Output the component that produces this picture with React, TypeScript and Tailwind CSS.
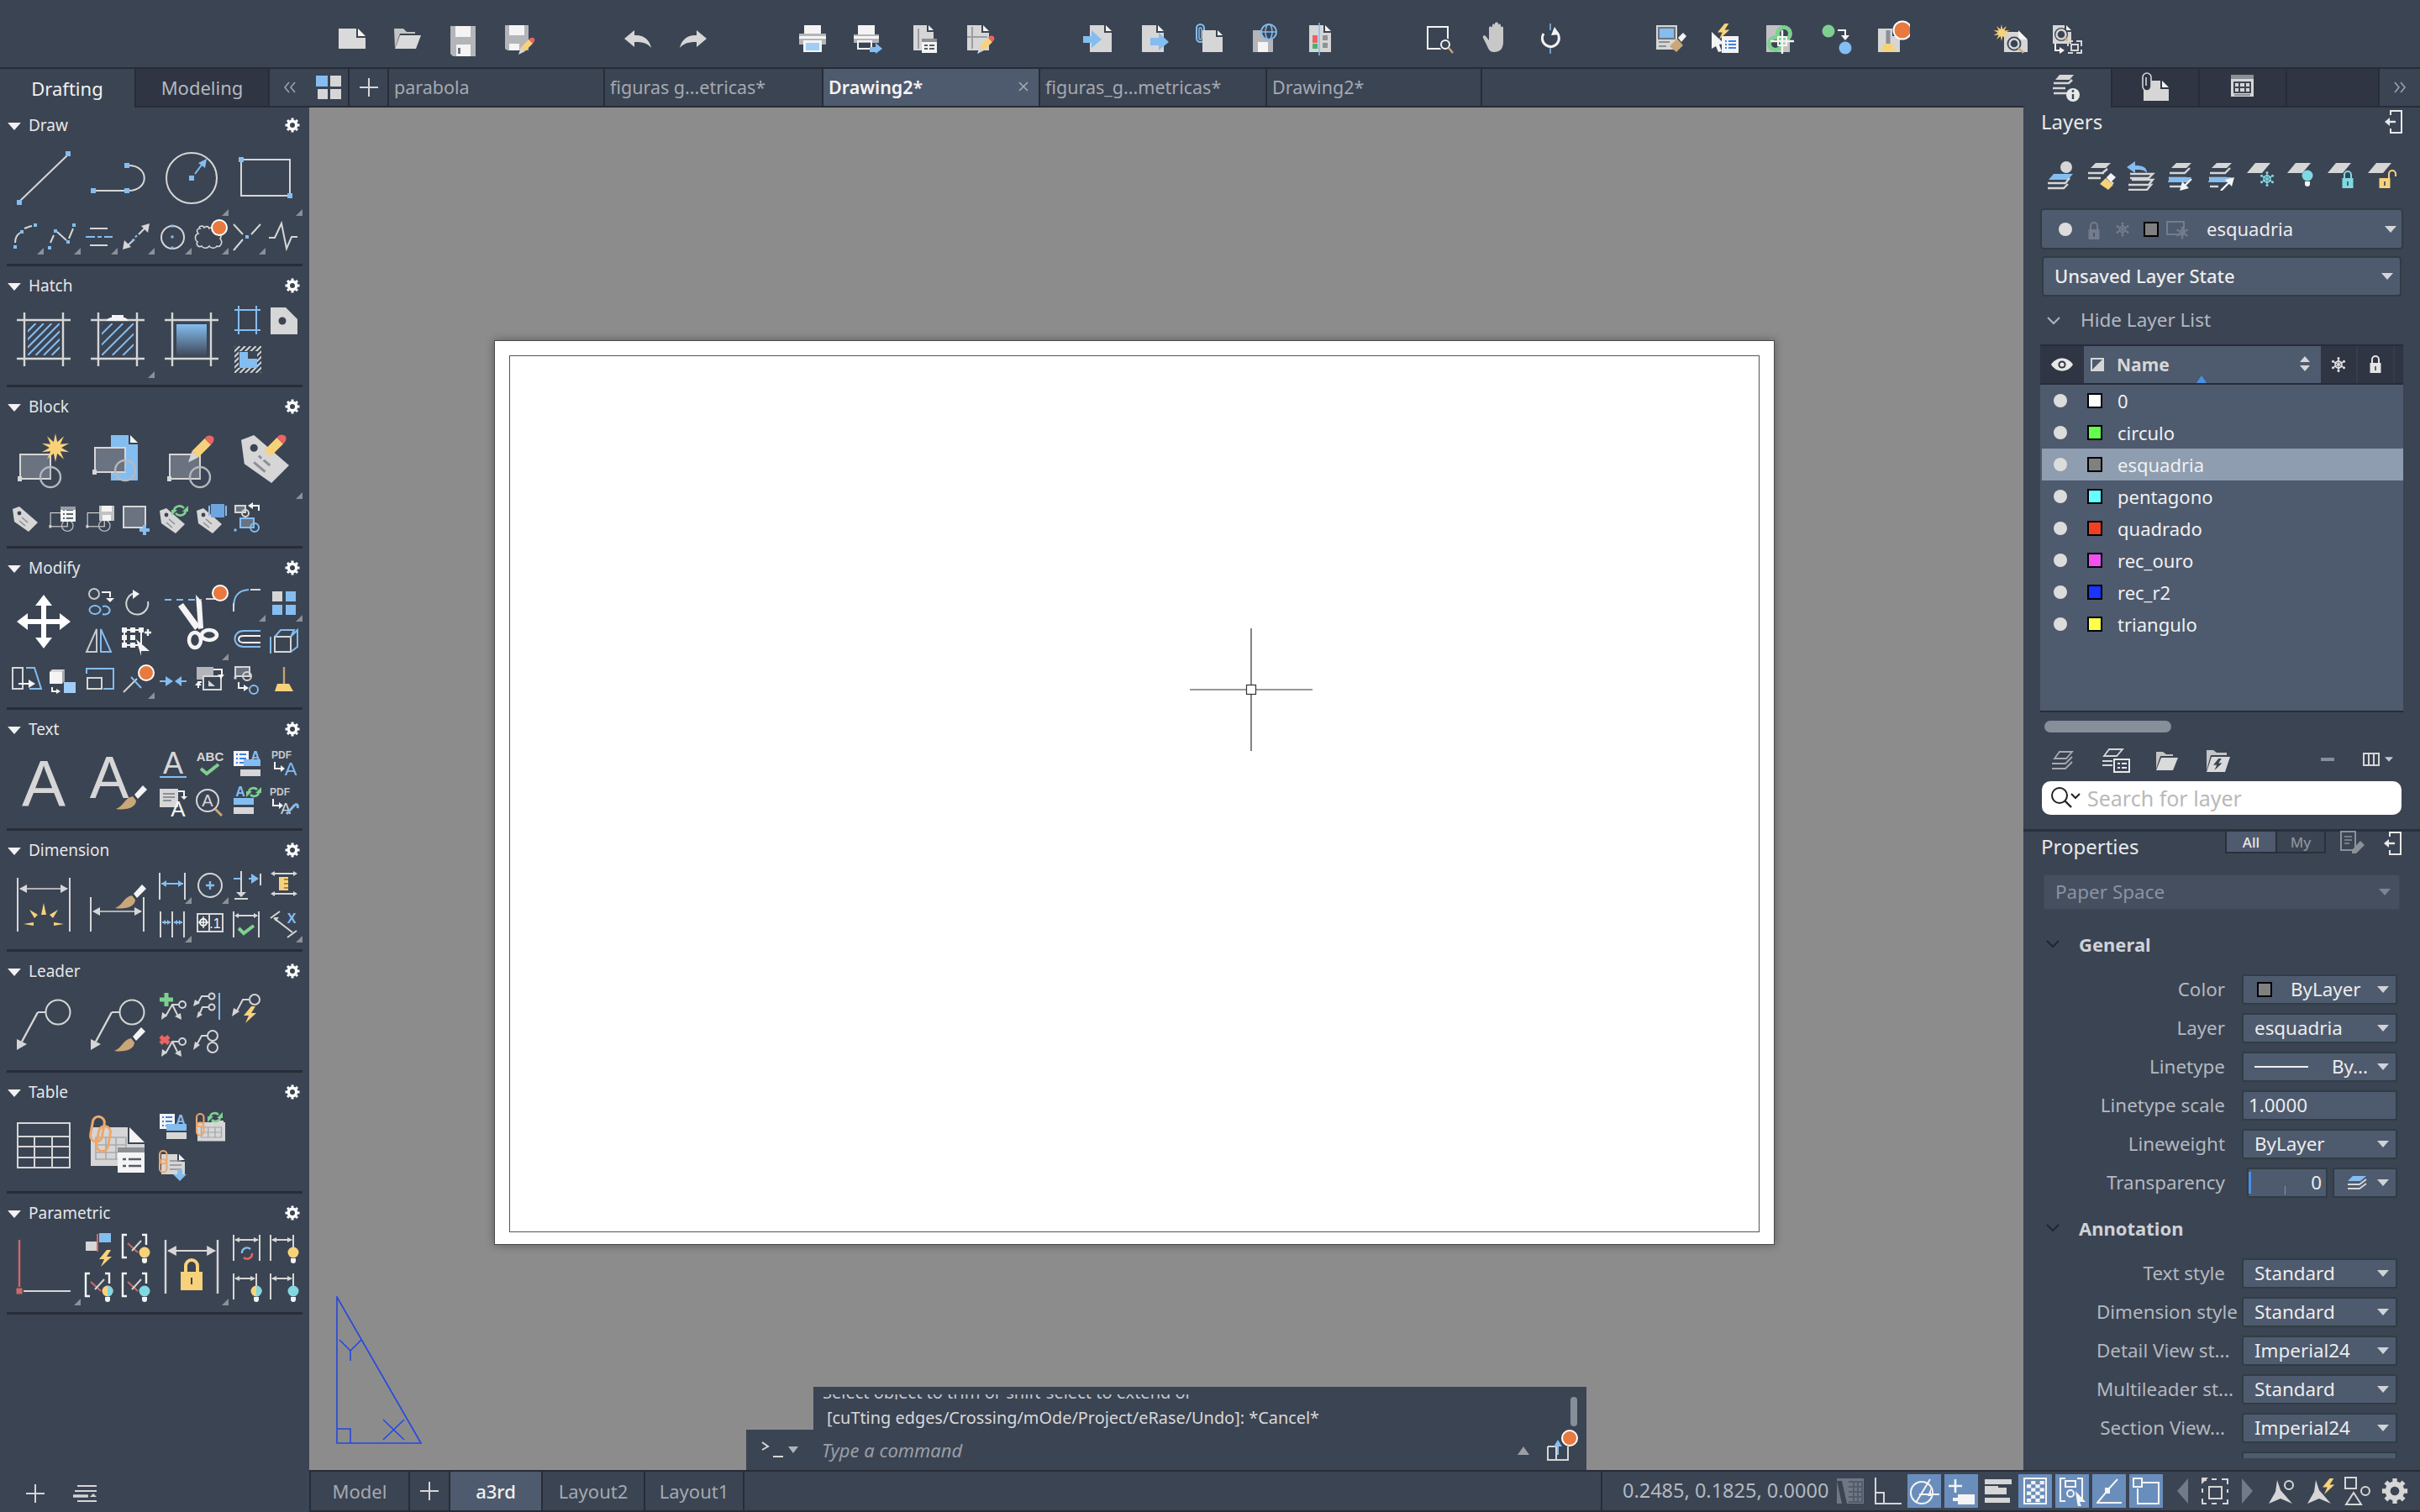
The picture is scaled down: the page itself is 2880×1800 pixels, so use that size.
import React from 'react';

const G = '#d6d6d6';
const B = '#84bdf0';
const W = '#f4f4f4';
const O = '#e8793f';
const Y = '#f8d27b';
const T = '#c9a778';
const GR = '#7ed091';
const RD = '#ec6363';
const CY = '#80d8e2';
const DK = '#6b7280';
const BG = '#3b4453';
const FA = 'Liberation Sans, sans-serif';

type P = { children?: React.ReactNode };

const Sv: React.FC<P & { w?: number; h?: number }> = ({ w = 44, h = 44, children }) => (
  <svg width={w} height={h} viewBox={`0 0 ${w} ${h}`} fill="none" className="block">
    {children}
  </svg>
);
const L = ({ d, c = G, w = 2, dash }: { d: string; c?: string; w?: number; dash?: string }) => (
  <path d={d} stroke={c} strokeWidth={w} strokeDasharray={dash} fill="none" />
);
const F = ({ d, c = G }: { d: string; c?: string }) => <path d={d} fill={c} />;
const R = ({ x, y, w, h, c = G }: { x: number; y: number; w: number; h: number; c?: string }) => (
  <rect x={x} y={y} width={w} height={h} fill={c} />
);
const RO = ({ x, y, w, h, c = G, f = 'none', sw = 2 }: { x: number; y: number; w: number; h: number; c?: string; f?: string; sw?: number }) => (
  <rect x={x} y={y} width={w} height={h} stroke={c} strokeWidth={sw} fill={f} />
);
const C = ({ x, y, r, c = G, w = 2, f = 'none' }: { x: number; y: number; r: number; c?: string; w?: number; f?: string }) => (
  <circle cx={x} cy={y} r={r} stroke={c} strokeWidth={w} fill={f} />
);
const Q = ({ x, y, s = 6, c = B }: { x: number; y: number; s?: number; c?: string }) => (
  <rect x={x - s / 2} y={y - s / 2} width={s} height={s} fill={c} />
);
const Dot = ({ x, y, r = 9 }: { x: number; y: number; r?: number }) => (
  <circle cx={x} cy={y} r={r} fill={O} stroke="#ffffff" strokeWidth={2} />
);
const Tx = ({ x, y, s, t, c = G, b = false, a = 'middle' }: { x: number; y: number; s: number; t: string; c?: string; b?: boolean; a?: 'middle' | 'start' }) => (
  <text x={x} y={y} fontSize={s} fontFamily={FA} fontWeight={b ? 700 : 400} fill={c} textAnchor={a}>
    {t}
  </text>
);
const At = ({ x, y, s = 1, children }: P & { x: number; y: number; s?: number }) => (
  <g transform={`translate(${x} ${y}) scale(${s})`}>{children}</g>
);
const Brush = ({ x, y, s = 1 }: { x: number; y: number; s?: number }) => (
  <At x={x} y={y} s={s}>
    <F c={T} d="M0 28C9 25 10 15 20 13L24 18C24 26 13 30 0 28Z" />
    <F c={W} d="M22 11L32 0L37 5L26 16Z" />
  </At>
);
const Pencil = ({ x, y, s = 1 }: { x: number; y: number; s?: number }) => (
  <At x={x} y={y} s={s}>
    <F c={G} d="M3 12L8 17L0 21Z" />
    <F c={Y} d="M3 12L13 2L18 7L8 17Z" />
    <F c={RD} d="M13 2C15 -1 18 -1 20 1C21 3 20 5 18 7Z" />
  </At>
);
const Bolt = ({ x, y, s = 1 }: { x: number; y: number; s?: number }) => (
  <At x={x} y={y} s={s}>
    <F c={Y} d="M9 0L0 11H6L2 20L15 8H9L14 0Z" />
  </At>
);
const Bulb = ({ x, y, c = Y, c2 }: { x: number; y: number; c?: string; c2?: string }) => (
  <At x={x} y={y}>
    <circle cx={0} cy={0} r={6.5} fill={c} />
    {c2 && <path d="M0 -6.5A6.5 6.5 0 0 1 0 6.5Z" fill={c2} />}
    <F c={W} d="M-3 7H3V10A3 3 0 0 1 -3 10Z" />
  </At>
);
const Snow = ({ x, y, c = G, r = 8 }: { x: number; y: number; c?: string; r?: number }) => (
  <At x={x} y={y}>
    <path d={`M0 ${-r}V${r}M${-r * 0.87} ${-r / 2}L${r * 0.87} ${r / 2}M${-r * 0.87} ${r / 2}L${r * 0.87} ${-r / 2}`} stroke={c} strokeWidth={1.4} />
    <path d={`M0 ${-r * 0.6}L${r * 0.52} ${-r * 0.3}V${r * 0.3}L0 ${r * 0.6}L${-r * 0.52} ${r * 0.3}V${-r * 0.3}Z`} stroke={c} strokeWidth={1.6} fill="none" />
    <circle cx={0} cy={-r} r={1.5} fill={c} />
    <circle cx={0} cy={r} r={1.5} fill={c} />
    <circle cx={r * 0.87} cy={r / 2} r={1.5} fill={c} />
    <circle cx={-r * 0.87} cy={r / 2} r={1.5} fill={c} />
    <circle cx={r * 0.87} cy={-r / 2} r={1.5} fill={c} />
    <circle cx={-r * 0.87} cy={-r / 2} r={1.5} fill={c} />
  </At>
);
const Lock = ({ x, y, c = G, open = false }: { x: number; y: number; c?: string; open?: boolean }) => (
  <At x={x} y={y}>
    <path d={open ? 'M5 -1V-6A4 4 0 0 1 13 -6V-3' : 'M-4 0V-5A4 4 0 0 1 4 -5V0'} stroke={c} strokeWidth={2} fill="none" />
    <rect x={-6.5} y={-1} width={13} height={12} fill={c} />
    <rect x={-0.8} y={3} width={1.6} height={5} fill={BG} />
  </At>
);
const Doc = ({ x, y, w, h, c = G, fold = W }: { x: number; y: number; w: number; h: number; c?: string; fold?: string }) => {
  const f = Math.round(w * 0.3);
  return (
    <>
      <path d={`M${x} ${y}H${x + w - f - 1}V${y + f + 1}H${x + w}V${y + h}H${x}Z`} fill={c} />
      <path d={`M${x + w - f + 1} ${y}L${x + w} ${y + f - 1}H${x + w - f + 1}Z`} fill={fold} />
    </>
  );
};
const Tag = ({ x, y, s = 1 }: { x: number; y: number; s?: number }) => (
  <At x={x} y={y} s={s}>
    <F d="M0 3L8 0L30 19L19 30L2 18Z" />
    <circle cx={8} cy={8} r={2.4} fill={BG} />
    <path d="M11 13L18 19M8 17L15 23" stroke="#8b8f96" strokeWidth={1.6} />
  </At>
);
const Blk = ({ x, y, s = 1, fill = DK }: { x: number; y: number; s?: number; fill?: string }) => (
  <At x={x} y={y} s={s}>
    <rect x={2} y={1} width={36} height={29} fill={fill} stroke={G} strokeWidth={2} />
    <rect x={-1} y={27} width={5} height={6} fill={G} />
    <circle cx={38} cy={28} r={12} stroke="#b6b9be" strokeWidth={2.4} fill="none" />
    <path d="M38 16V30" stroke="#b6b9be" strokeWidth={1.5} />
  </At>
);
const Star = ({ x, y, r = 17 }: { x: number; y: number; r?: number }) => {
  let d = '';
  for (let i = 0; i < 20; i++) {
    const a = (i * Math.PI) / 10;
    const q = i % 2 ? r * 0.42 : r;
    d += `${i ? 'L' : 'M'}${(x + Math.sin(a) * q).toFixed(1)} ${(y - Math.cos(a) * q).toFixed(1)}`;
  }
  return <path d={d + 'Z'} fill={Y} />;
};
const Frame = ({ cap = false }: { cap?: boolean }) => (
  <>
    <L d="M12 21H76M12 67H76M21 12V76M67 12V76" w={2.4} />
    {cap && <F c={W} d="M31 22C31 19 35 18 37 18V15H51V18C53 18 56 19 56 22Z" />}
  </>
);
const HatchIn = ({ x, y, w, h, n = 9, c = B }: { x: number; y: number; w: number; h: number; n?: number; c?: string }) => (
  <svg x={x} y={y} width={w} height={h}>
    {Array.from({ length: n }).map((_, i) => (
      <line key={i} x1={(i * (w + h)) / (n - 1) - h} y1={h} x2={(i * (w + h)) / (n - 1)} y2={0} stroke={c} strokeWidth={2} />
    ))}
  </svg>
);
const Dim = ({ x1, x2, y, top, bot, w = 2, c = G, head = 5 }: { x1: number; x2: number; y: number; top: number; bot: number; w?: number; c?: string; head?: number }) => (
  <>
    <L d={`M${x1} ${top}V${bot}M${x2} ${top}V${bot}`} w={w} />
    <L c={c} d={`M${x1 + 3} ${y}H${x2 - 3}`} w={w - 0.4} />
    <F c={c} d={`M${x1 + 2} ${y}L${x1 + 2 + head * 1.8} ${y - head}V${y + head}Z`} />
    <F c={c} d={`M${x2 - 2} ${y}L${x2 - 2 - head * 1.8} ${y - head}V${y + head}Z`} />
  </>
);
const Tbl = ({ x, y, s = 1 }: { x: number; y: number; s?: number }) => (
  <At x={x} y={y} s={s}>
    <R x={0} y={0} w={44} h={30} c={G} />
    <path d="M6 8H38V24H6ZM6 16H38M17 8V24M28 8V24" stroke="#a2a4a8" strokeWidth={1.6} fill="none" />
  </At>
);
const Link = ({ x, y, s = 1 }: { x: number; y: number; s?: number }) => (
  <At x={x} y={y} s={s}>
    <rect x={0} y={0} width={10} height={18} rx={5} stroke="#eca86c" strokeWidth={2.4} fill="none" />
    <rect x={0} y={12} width={10} height={18} rx={5} stroke="#eca86c" strokeWidth={2.4} fill="none" />
  </At>
);
const Lst = ({ x, y, w = 18, c = '#3b82e8' }: { x: number; y: number; w?: number; c?: string }) => (
  <>
    <R x={x} y={y} w={w} h={w} c={W} />
    <path d={`M${x + 3} ${y + 4}h2M${x + 7} ${y + 4}h${w - 10}M${x + 3} ${y + w / 2}h2M${x + 7} ${y + w / 2}h${w - 10}M${x + 3} ${y + w - 4}h2M${x + 7} ${y + w - 4}h${w - 10}`} stroke={c} strokeWidth={2} />
  </>
);
const Sync = ({ x, y, r = 7, c = GR }: { x: number; y: number; r?: number; c?: string }) => (
  <At x={x} y={y}>
    <path d={`M${-r} -1A${r} ${r} 0 0 1 ${r - 2} -3`} stroke={c} strokeWidth={2.6} fill="none" />
    <path d={`M${r} 1A${r} ${r} 0 0 1 ${-r + 2} 3`} stroke={c} strokeWidth={2.6} fill="none" />
    <path d={`M${r + 3} -6V1H${r - 4}Z`} fill={c} />
    <path d={`M${-r - 3} 6V-1H${-r + 4}Z`} fill={c} />
  </At>
);
const Bracket = () => (
  <>
    <L w={2.4} c={W} d="M11 33H6V6H11M29 6H34V18" />
    <L c="#cc6a6a" d="M12 16L24 27" w={2} />
    <L d="M17 25L28 13" w={2} />
  </>
);
const DimTop = () => (
  <>
    <L d="M6 6V37M33 6V22" />
    <L d="M8 12H31" />
    <F d="M7 12L13 9V15Z" />
    <F d="M32 12L26 9V15Z" />
  </>
);

// ---- top toolbar icons ----
const Disk = ({ x = 6, y = 6 }: { x?: number; y?: number }) => (
  <At x={x} y={y}>
    <F c="#b3b5b8" d="M0 0H30V36H3L0 33Z" />
    <R x={6} y={0} w={18} h={13} c={W} />
    <R x={7} y={22} w={17} h={14} c={W} />
    <R x={9} y={26} w={3} h={7} c="#6b7280" />
  </At>
);
const top: React.ReactNode[][] = [
  [
    <Doc key="a" x={6} y={10} w={32} h={24} c="#dadada" />,
    <g key="b">
      <F c="#c4c4c4" d="M6 10H17L21 14H31V16H13L7 33Z" />
      <F c="#dadada" d="M13 18H38L32 34H7Z" />
    </g>,
    <Disk key="c" x={7} y={7} />,
    <g key="d">
      <At x={6} y={6}>
        <F c="#b3b5b8" d="M0 0H28V30H3L0 28Z" />
        <R x={5} y={0} w={18} h={12} c={W} />
        <R x={5} y={22} w={12} h={8} c={W} />
      </At>
      <Pencil x={22} y={21} s={0.95} />
    </g>,
  ],
  [
    <F key="e" c="#d6d6d6" d="M6 22L18 12V18C28 17 36 23 38 33C33 27 27 26 18 26V32Z" />,
    <F key="f" c="#d6d6d6" d="M38 22L26 12V18C16 17 8 23 6 33C11 27 17 26 26 26V32Z" />,
  ],
  [
    <g key="g">
      <R x={12} y={6} w={20} h={10} c={W} />
      <R x={6} y={16} w={32} h={13} c="#b3b5b8" />
      <R x={6} y={19} w={32} h={3} c={W} />
      <R x={11} y={24} w={22} h={14} c={W} />
      <R x={14} y={27} w={16} h={9} c="#9fcdf7" />
    </g>,
    <g key="h">
      <R x={10} y={6} w={20} h={11} c={W} />
      <R x={5} y={17} w={30} h={10} c="#b3b5b8" />
      <R x={5} y={19} w={30} h={3} c={W} />
      <RO x={10} y={25} w={16} h={9} c={W} />
      <F c={B} d="M24 38V32H31V27L39 34L31 40V38Z" transform="translate(-2 -1)" />
    </g>,
    <g key="i">
      <Doc x={10} y={6} w={24} h={30} c="#d6d6d6" />
      <path d="M16 10V34" stroke="#9c9ea2" strokeWidth={2} />
      <R x={20} y={22} w={18} h={17} c={W} />
      <R x={20} y={22} w={18} h={4} c="#8c8f94" />
      <R x={23} y={29} w={4} h={2} c="#555c68" />
      <R x={29} y={29} w={6} h={2} c="#555c68" />
      <R x={23} y={33} w={4} h={2} c="#555c68" />
      <R x={29} y={33} w={6} h={2} c="#555c68" />
    </g>,
    <g key="j">
      <Doc x={8} y={6} w={26} h={30} c="#d6d6d6" />
      <path d="M14 8V34" stroke="#9c9ea2" strokeWidth={2} />
      <path d="M8 20H32" stroke="#9c9ea2" strokeWidth={2} />
      <Pencil x={20} y={19} s={1} />
    </g>,
  ],
  [
    <g key="k">
      <Doc x={12} y={6} w={26} h={32} />
      <F c={B} d="M4 19H14V12L26 23L14 33V27H4Z" />
    </g>,
    <g key="l">
      <Doc x={8} y={6} w={26} h={32} />
      <F c={B} d="M18 21H28V15L40 26L28 36V30H18Z" />
    </g>,
    <g key="m">
      <rect x={7} y={5} width={9} height={21} rx={4.5} stroke={B} strokeWidth={2} fill="none" />
      <rect x={10} y={9} width={3} height={14} rx={1.5} stroke={B} strokeWidth={1.5} fill="none" />
      <Doc x={14} y={12} w={24} h={26} />
    </g>,
    <g key="n">
      <At x={8} y={12}>
        <F c="#b3b5b8" d="M0 0H24V26H0Z" />
        <R x={6} y={14} w={12} h={12} c={W} />
      </At>
      <circle cx={27} cy={14} r={9.5} fill={BG} />
      <circle cx={27} cy={14} r={9} stroke={B} strokeWidth={2} fill="none" />
      <ellipse cx={27} cy={14} rx={4} ry={9} stroke={B} strokeWidth={1.5} fill="none" />
      <path d="M18 14H36" stroke={B} strokeWidth={1.5} />
    </g>,
    <g key="o">
      <Doc x={9} y={6} w={26} h={32} />
      <path d="M21 3V42" stroke={B} strokeWidth={1.5} />
      <R x={13} y={18} w={6} h={9} c={RD} />
      <R x={13} y={28} w={6} h={6} c="#49b36b" />
      <R x={25} y={18} w={6} h={6} c="#909296" />
      <R x={25} y={27} w={6} h={6} c="#909296" />
    </g>,
  ],
  [
    <g key="p">
      <RO x={8} y={8} w={24} h={26} c={W} />
      <circle cx={29} cy={29} r={7.5} fill={BG} />
      <C x={29} y={29} r={5} w={2} c={W} />
      <L c={T} d="M33 33L38 39" w={2.4} />
    </g>,
    <F key="q" c="#c8c8c8" d="M19 12V6C19 4 22 4 22 6V4C22 2 26 2 26 4V6C26 4 29 4 29 6V9C29 7 32 7 32 9V26C32 33 29 38 21 38C15 38 14 33 12 29L8 21C7 18 10 17 12 20L15 24V9C15 7 19 7 19 9Z" />,
    <g key="r">
      <path d="M22 4V12M22 30V40" stroke={B} strokeWidth={1.5} />
      <path d="M14 16A10 10 0 1 0 29 14" stroke={W} strokeWidth={3} fill="none" />
      <F c={W} d="M27 8L33 17L23 18Z" />
    </g>,
  ],
  [
    <g key="s">
      <R x={6} y={6} w={25} h={29} c={G} />
      <RO x={9} y={9} w={19} h={13} c="#70747a" f={B} />
      <path d="M9 26H22M9 31H18" stroke="#8b8f96" strokeWidth={2} />
      <F c={T} d="M22 31L31 22L38 30L30 38Z" />
      <F c={W} d="M32 21L38 15L42 19L36 26Z" transform="translate(0 1)" />
    </g>,
    <g key="t">
      <F c={W} d="M6 14L21 28L15 29L18 37L14 38L11 31L6 34Z" />
      <R x={18} y={19} w={20} h={20} c={W} />
      <path d="M22 25h2M26 25h9M22 29h2M26 29h9M22 33h2M26 33h9" stroke="#3b82e8" strokeWidth={2} />
      <Bolt x={13} y={4} s={0.95} />
    </g>,
    <g key="u">
      <Doc x={5} y={6} w={28} h={32} c="#c2c2c2" />
      <circle cx={26} cy={16} r={10} fill={GR} />
      <circle cx={16} cy={28} r={10} fill={GR} />
      <circle cx={26} cy={16} r={5} fill={BG} />
      <circle cx={16} cy={28} r={5} fill={BG} />
      <path d="M10 25H38M24 12V40" stroke={W} strokeWidth={2.4} />
      <RO x={19} y={20} w={10} h={10} c={W} />
    </g>,
    <g key="v">
      <circle cx={13} cy={13} r={7.5} fill={GR} />
      <circle cx={33} cy={33} r={7.5} fill={B} />
      <path d="M24 12H33V19" stroke={W} strokeWidth={2} />
      <F c={W} d="M28 18H38L33 24Z" />
    </g>,
    <g key="w">
      <Doc x={6} y={10} w={26} h={28} c={G} />
      <path d="M18 12V28" stroke="#8b8f96" strokeWidth={5} />
      <F c={Y} d="M9 38L13 28H23L27 38Z" />
      <circle cx={35} cy={12} r={10.5} fill={O} stroke="#ffffff" strokeWidth={2} />
    </g>,
  ],
  [
    <g key="x">
      <path d="M14 14H32L42 24V38H14Z" fill={G} />
      <path d="M31 12L42 23H31Z" fill={W} />
      <circle cx={26} cy={28} r={8.5} fill={BG} />
      <C x={26} y={28} r={5.5} w={2.4} c={G} />
      <L c={T} d="M31 33L37 39" w={2.4} />
      <Star x={11} y={15} r={10} />
    </g>,
    <g key="y">
      <Doc x={6} y={6} w={22} h={22} />
      <circle cx={16} cy={17} r={8} fill={BG} />
      <C x={16} y={17} r={5.5} w={2.4} c={G} />
      <L c={T} d="M20 21L26 27" w={2.4} />
      <L c={W} d="M9 28V36H15" w={2} />
      <F c={W} d="M14 32L20 36L14 40Z" />
      <path d="M24 31V25H30M34 25H40V31M40 35V39H34M30 39H24" stroke={G} strokeWidth={2} fill="none" />
      <RO x={28} y={29} w={8} h={7} c={G} />
    </g>,
  ],
];

// ---- palette ----
type It = { n: React.ReactNode; big?: boolean; fly?: boolean };
const big = (n: React.ReactNode, fly = false): It => ({ n: <Sv w={88} h={90}>{n}</Sv>, big: true, fly });
const sm = (n: React.ReactNode, fly = false): It => ({ n: <Sv>{n}</Sv>, fly });
const gap: It = { n: null };

const draw: It[] = [
  big(<><L d="M16 72L72 18" /><Q x={15} y={74} /><Q x={73} y={16} /></>),
  big(<><L d="M18 60H52" /><L d="M57 30C82 30 82 60 57 60" /><Q x={15} y={60} /><Q x={55} y={60} /><Q x={55} y={30} /></>),
  big(<><C x={44} y={45} r={30} /><Q x={44} y={45} /><L c={B} d="M48 40L57 28" /><F c={B} d="M62 22L52 27L60 33Z" /></>, true),
  big(<><path d="M15 23H73V66" stroke={G} strokeWidth={2} /><path d="M15 23V66H73" stroke={G} strokeWidth={2} /><Q x={15} y={23} /><Q x={73} y={66} /></>, true),
  sm(<><L d="M10 30C10 24 13 20 16 18M21 13C24 12 26 11 30 10" /><Q x={10} y={35} s={4} /><Q x={18} y={17} s={4} /><Q x={34} y={9} s={4} /></>, true),
  sm(<><L d="M8 30L12 21M16 17L27 27M30 25L35 13" /><Q x={7} y={36} s={4} /><Q x={14} y={16} s={4} /><Q x={29} y={29} s={4} /><Q x={36} y={9} s={4} /></>, true),
  sm(<><L d="M11 13H32M11 33H32" /><L c={B} d="M6 23H17M20 23H25M28 23H38" /></>, true),
  sm(<><L d="M20 26L12 33M25 20L33 12" /><L c={B} d="M17 28L24 20" dash="3 3" /><F d="M6 38L8 27L16 35Z" /><F d="M38 7L36 18L28 10Z" /></>, true),
  sm(<><path d="M21 10A13.5 13.5 0 0 0 8 23A13.5 13.5 0 0 0 21 37A13.5 13.5 0 0 0 35 23A13.5 13.5 0 0 0 21 10" stroke={G} strokeWidth={2} fill="none" /><Q x={21} y={10} s={3} /><Q x={21} y={23} s={3} /><Q x={21} y={36} s={3} /></>, true),
  sm(<><path d="M10 13C7 10 14 9 15 12C17 10 20 10 21 13C24 10 30 11 28 15C36 17 36 22 34 25C38 30 34 36 30 34C28 38 22 36 21 34C18 38 13 36 12 34C8 36 5 32 7 29C3 26 4 20 8 19C5 16 7 13 10 13Z" stroke={G} strokeWidth={1.6} fill="none" /><Dot x={33} y={12} r={9} /></>, true),
  sm(<><L d="M6 8L17 20M38 8L27 20M6 39L17 26" /><Q x={22} y={23} s={4} /></>, true),
  sm(<L d="M4 24H11L19 7L25 37L31 23H38" />),
];

const hatch: It[] = [
  big(<><Frame /><HatchIn x={25} y={25} w={38} h={38} /></>),
  big(<><Frame cap /><HatchIn x={25} y={25} w={38} h={38} n={7} /></>, true),
  big(<><defs><linearGradient id="hgrad" x1="0" y1="0" x2="0" y2="1"><stop offset="0" stopColor="#84bdf0" /><stop offset="1" stopColor="#3f4858" /></linearGradient></defs><Frame /><rect x={26} y={26} width={36} height={38} fill="url(#hgrad)" /></>),
  sm(<><L c={B} d="M7 9H38M7 33H38M12 4V38M33 4V38" /></>),
  sm(<><F d="M6 6H24L38 20V38H6Z" /><circle cx={20} cy={22} r={4.5} fill={BG} /></>),
  sm(<><HatchIn x={7} y={6} w={32} h={32} n={11} c={G} /><F c={BG} d="M12 12H34V32H12Z" /><F c={B} d="M13 13H23V21H34V32H13Z" /></>),
];

const block: It[] = [
  big(<><Blk x={14} y={36} /><Star x={58} y={29} /></>),
  big(<><Doc x={36} y={14} w={32} h={54} c={B} /><Blk x={15} y={28} s={1} /></>),
  big(<><Blk x={16} y={36} /><Pencil x={40} y={15} s={1.5} /></>),
  big(<><Tag x={15} y={14} s={1.9} /><Pencil x={38} y={14} s={1.5} /></>, true),
  sm(<Tag x={7} y={7} />),
  sm(<><Blk x={7} y={14} s={0.56} fill="none" /><Lst x={20} y={7} w={18} c="#5c6472" /><R x={20} y={7} w={18} h={4} c="#9a9da2" /></>),
  sm(<><Blk x={7} y={14} s={0.56} fill="none" /><At x={22} y={6}><F c="#c2c2c2" d="M0 0H18V18H0Z" /><R x={3} y={0} w={12} h={7} c={W} /><R x={4} y={11} w={10} h={7} c={W} /></At></>),
  sm(<><RO x={7} y={7} w={26} h={25} f={DK} /><path d="M26 35H38M32 29V41" stroke={B} strokeWidth={4} /></>),
  sm(<><Tag x={6} y={9} /><Sync x={30} y={12} r={7} /></>),
  sm(<><Tag x={6} y={9} /><RO x={24} y={5} w={14} h={14} c="#6ea4e0" f="#6ea4e0" /><L c={B} d="M21 6V18M41 6V18" /></>),
  sm(<><RO x={8} y={6} w={12} h={8} f={DK} /><C x={20} y={15} r={4} c={G} /><RO x={14} y={21} w={16} h={11} c={B} f={DK} /><C x={31} y={32} r={5} c={B} /><L c={W} d="M36 12V6H28" /><F c={W} d="M29 2V10L23 6Z" /><Q x={8} y={35} s={3} /></>),
];

const modify: It[] = [
  big(<F c="#ffffff" d="M44 12L54 25H47V41H63V34L76 44L63 54V47H47V63H54L44 76L34 63H41V47H25V54L12 44L25 34V41H41V25H34Z" />),
  sm(<><C x={16} y={11} r={6} c="#c8c8c8" /><L c={W} d="M25 9H35V15" /><F c={W} d="M30 16H40L35 21Z" /><ellipse cx={17} cy={30} rx={6.5} ry={5} stroke={B} strokeWidth={2} fill="none" /><path d="M26 26A6 5 0 1 1 26 35" stroke={B} strokeWidth={2} fill="none" /></>),
  sm(<><path d="M20 10A13 13 0 1 0 36 20" stroke={G} strokeWidth={2} fill="none" /><F c={W} d="M18 6L26 11L18 17Z" /></>),
  big(<><L c={B} d="M12 18H56" dash="8 6" /><L c={G} d="M61 17H76" /><F c={W} d="M49 12L56 20L58 52L52 53Z" /><F c={W} d="M28 26L34 22L54 49L48 54Z" /><ellipse cx={48} cy={66} rx={7} ry={9} stroke={W} strokeWidth={4.5} fill="none" /><ellipse cx={65} cy={60} rx={9} ry={6} stroke={W} strokeWidth={4.5} fill="none" /><Dot x={78} y={10} r={9} /></>, true),
  sm(<><path d="M6 28C6 15 10 7 24 6" stroke={B} strokeWidth={2} fill="none" /><L d="M6 22V32" /><L d="M26 6H38" /></>, true),
  sm(<><R x={8} y={8} w={12} h={12} c={G} /><R x={24} y={8} w={12} h={12} c={B} /><R x={8} y={24} w={12} h={12} c={B} /><R x={24} y={24} w={12} h={12} c={B} /></>, true),
  sm(<><path d="M19 7L7 34H19Z" stroke="#c8c8c8" strokeWidth={2} fill="none" /><path d="M24 7L36 34H24Z" stroke={B} strokeWidth={2} fill="none" /></>),
  sm(<><RO x={8} y={8} w={20} h={18} c={W} /><Q x={8} y={8} c={W} /><Q x={18} y={8} c={W} /><Q x={28} y={8} c={W} /><Q x={8} y={17} c={W} /><Q x={18} y={17} c={W} /><Q x={8} y={26} c={W} /><Q x={18} y={26} c={W} /><F c={W} d="M22 19L38 33L28 33L28 39Z" /><path d="M32 11H40M36 7V15" stroke={W} strokeWidth={2.4} /></>),
  sm(<><path d="M38 9H18C4 9 4 28 18 28H38" stroke={B} strokeWidth={2} fill="none" /><path d="M38 15H18C10 15 10 23 18 23H38" stroke={W} strokeWidth={2} fill="none" /></>),
  sm(<><RO x={11} y={16} w={19} h={18} /><path d="M11 16L18 8H34L30 16M30 16L38 8V28L30 34" stroke={B} strokeWidth={2} fill="none" /><L c={B} d="M6 16V36" /></>),
  sm(<><RO x={7} y={7} w={12} h={25} /><path d="M23 7H33L41 32H27" stroke={B} strokeWidth={2} fill="none" /><path d="M14 26H28" stroke={W} strokeWidth={2} /><F c={W} d="M26 21L34 26L26 31Z" /></>),
  sm(<><F c={W} d="M7 12H22V26H7Z" /><F c="#a5a7ab" d="M22 12L25 9V23L22 26Z" /><F c={G} d="M7 12L10 9H25L22 12Z" /><L c={W} d="M10 30V35H16" /><F c={W} d="M15 32L20 35L15 38Z" /><R x={24} y={24} w={14} h={13} c="#9fcdf7" /></>),
  sm(<><L c={B} d="M7 14V8H39V32H27" /><RO x={8} y={19} w={17} h={13} /></>),
  sm(<><L d="M7 36L23 20" /><L c={B} d="M16 18L28 31" /><Dot x={34} y={13} r={9} /></>, true),
  sm(<><L c={B} d="M6 23H14M30 23H38" /><F c={B} d="M22 23L13 17V29Z" /><F c={B} d="M24 23L32 17V29Z" /></>),
  sm(<><R x={6} y={6} w={20} h={15} c="#b3b5b8" /><RO x={14} y={17} w={21} h={16} f={BG} /><F c={G} d="M20 29V22L28 29Z" /><L c={W} d="M26 9H36V15" /><F c={W} d="M31 15H39L35 20Z" /><L c={W} d="M12 24H8V31" /><F c={W} d="M4 28H12L8 23Z" /></>),
  sm(<><RO x={8} y={6} w={17} h={11} f={DK} /><C x={22} y={17} r={5} /><Q x={8} y={19} s={3} c={G} /><L c={W} d="M12 24V31H19" /><F c={W} d="M18 27L24 31L18 35Z" /><C x={30} y={33} r={5} c={B} /></>),
  sm(<><path d="M22 6V26" stroke="#c4a070" strokeWidth={2.4} /><F c={Y} d="M14 26H28L33 35H11Z" /></>),
];

const text: It[] = [
  big(<Tx x={44} y={72} s={78} t="A" />),
  big(<><Tx x={34} y={62} s={70} t="A" /><Brush x={42} y={47} /></>),
  sm(<><Tx x={22} y={33} s={36} t="A" /><L c={B} d="M6 37H38" /></>),
  sm(<><Tx x={22} y={18} s={15} t="ABC" b /><path d="M11 27L18 33L32 22" stroke={GR} strokeWidth={4} fill="none" /></>),
  sm(<><Lst x={6} y={6} w={18} /><Tx x={32} y={18} s={16} t="A" c={B} b /><R x={18} y={16} w={20} h={8} c={B} /><R x={14} y={28} w={24} h={8} c={G} /></>),
  sm(<><Tx x={7} y={15} s={12} t="PDF" a="start" b c="#c8c8c8" /><L c={W} d="M11 19V27H18" /><F c={W} d="M18 23L23 27L18 31Z" /><Tx x={30} y={35} s={22} t="A" c={B} /></>),
  sm(<><R x={6} y={5} w={22} h={22} c={G} /><path d="M10 11H24M10 15H24M10 19H20" stroke="#8b8f96" strokeWidth={2} /><L c={W} d="M28 8H35V14" /><F c={W} d="M31 14H39L35 18Z" /><Tx x={28} y={38} s={26} t="A" c={W} /></>),
  sm(<><C x={19} y={19} r={13} /><Tx x={19} y={26} s={20} t="A" /><L c={T} d="M28 29L36 37" w={3} /></>),
  sm(<><Tx x={14} y={14} s={16} t="A" c={B} b /><Sync x={30} y={9} r={6} /><R x={6} y={16} w={24} h={8} c={B} /><R x={6} y={27} w={24} h={8} c={G} /></>),
  sm(<><Tx x={5} y={13} s={12} t="PDF" a="start" b c="#c8c8c8" /><L c={W} d="M9 17V25H16" /><F c={W} d="M16 21L21 25L16 29Z" /><Tx x={24} y={35} s={18} t="A" c={G} /><L c={B} d="M25 35L35 24M35 24C38 23 39 25 38 28" w={3} /></>),
];

const dimension: It[] = [
  big(<><Dim x1={13} x2={75} y={26} top={13} bot={77} /><F c={Y} d="M44 43L47 57H41Z" /><F c={Y} d="M27 51L37 57L33 61Z" /><F c={Y} d="M61 51L51 57L55 61Z" /><F c={Y} d="M20 68L32 66V70Z" /><F c={Y} d="M68 68L56 66V70Z" /></>),
  big(<><Dim x1={12} x2={75} y={53} top={36} bot={77} /><Brush x={41} y={21} /></>),
  sm(<><L d="M6 7V39M36 7V39" /><L c={B} d="M8 20H34" /><F c={B} d="M8 20L14 16V24Z" /><F c={B} d="M34 20L28 16V24Z" /></>, true),
  sm(<><C x={22} y={22} r={14} /><path d="M17 22H27M22 17V27" stroke={B} strokeWidth={2.4} /></>, true),
  sm(<><L c={B} d="M6 14H16M24 14H28" /><F c={B} d="M36 14L27 8V20Z" /><L d="M38 8V22M15 5V34" /><F d="M15 36L9 30H21Z" /><L d="M7 38H23" /></>),
  sm(<><L d="M8 8H36M8 32H36" /><F d="M6 8L11 5V11Z" /><F d="M38 8L33 5V11Z" /><F d="M6 32L11 29V35Z" /><F d="M38 32L33 29V35Z" /><R x={16} y={12} w={11} h={16} c={Y} /><path d="M22 15H27M22 20H27M22 25H27" stroke="#8c6d32" strokeWidth={1.4} /></>),
  sm(<><L d="M7 7V38M21 7V38M35 7V38" /><L c={B} d="M9 20H19M23 20H33" /><F c={B} d="M9 20L13 17V23Z" /><F c={B} d="M19 20L15 17V23Z" /><F c={B} d="M23 20L27 17V23Z" /><F c={B} d="M33 20L29 17V23Z" /></>, true),
  sm(<><RO x={7} y={10} w={30} h={21} /><path d="M21 10V31" stroke={G} strokeWidth={2} /><C x={14} y={20} r={4} c={W} /><path d="M8 20H20M14 13V27" stroke={W} strokeWidth={1.5} /><Tx x={28} y={27} s={16} t=".1" c={W} /></>),
  sm(<><L d="M6 7V38M36 7V38" /><L d="M8 12H34" /><F d="M7 12L12 9V15Z" /><F d="M35 12L30 9V15Z" /><path d="M12 27L18 33L30 24" stroke={GR} strokeWidth={4} fill="none" /></>),
  sm(<><L d="M6 15L17 7M26 38L37 30" /><L d="M10 15L32 32" /><F d="M10 14L16 14L12 19Z" /><Tx x={31} y={21} s={16} t="X" c={B} b /></>, true),
];

const leader: It[] = [
  big(<><L d="M37 29H47" /><L d="M37 29L18 64" w={2.4} /><F d="M12 61L24 67L12 74Z" /><C x={61} y={29} r={14.5} /></>),
  big(<><L d="M37 29H47" /><L d="M37 29L18 64" w={2.4} /><F d="M12 61L24 67L12 74Z" /><C x={61} y={29} r={14.5} /><Brush x={40} y={47} /></>),
  sm(<><path d="M6 14H22M14 6V22" stroke={GR} strokeWidth={5} /><C x={33} y={20} r={4} /><L d="M28 20H21L13 34M21 20L28 34" /><F d="M8 38L9 29L15 33Z" /><F d="M32 38L24 34L31 30Z" /></>),
  sm(<><C x={24} y={10} r={3.5} /><C x={24} y={23} r={3.5} /><L d="M20 10H12L7 19M20 23H13L9 32" /><F d="M2 22L4 14L10 18Z" /><F d="M6 36L8 28L13 32Z" /><L c={B} d="M33 6V38" /></>),
  sm(<><L d="M24 14H17L9 29" /><C x={31} y={14} r={6} /><F d="M4 34L6 24L13 28Z" /><Bolt x={18} y={22} /></>),
  gap,
  sm(<><path d="M7 12L17 20M17 12L7 20" stroke={RD} strokeWidth={5} /><C x={33} y={18} r={4} /><L d="M28 18H21L13 32M21 18L28 32" /><F d="M8 36L9 27L15 31Z" /><F d="M32 36L24 32L31 28Z" /></>),
  sm(<><C x={25} y={11} r={6} /><C x={25} y={25} r={6} /><L d="M19 11H12L6 22" /><F d="M2 28L4 18L10 22Z" /></>),
];

const table: It[] = [
  big(<path d="M13 17H75V70H13ZM13 33H75M13 45H75M13 58H75M33 33V70M54 33V70" stroke={G} strokeWidth={2} fill="none" />),
  big(<>
    <Doc x={12} y={22} w={64} h={46} c={G} />
    <path d="M18 34H54V60H18ZM18 43H54M18 52H54M30 34V60M42 34V60" stroke="#a8aaae" strokeWidth={1.6} fill="none" />
    <g transform="rotate(10 24 30)">
      <rect x={12} y={10} width={14} height={30} rx={7} stroke="#eca86c" strokeWidth={3} fill="none" />
      <rect x={21} y={20} width={14} height={30} rx={7} stroke="#eca86c" strokeWidth={3} fill="none" />
    </g>
    <rect x={44} y={46} width={32} height={30} fill={W} />
    <rect x={44} y={46} width={32} height={6} fill="#8c8f94" />
    <path d="M50 60h4M57 60h15M50 68h4M57 68h15" stroke="#555c68" strokeWidth={2.6} />
  </>),
  sm(<><Lst x={6} y={6} w={18} /><Tx x={31} y={19} s={16} t="A" c={B} b /><R x={14} y={18} w={24} h={8} c={B} /><R x={14} y={28} w={24} h={8} c={G} /></>),
  sm(<><Tbl x={7} y={16} s={0.75} /><F c={G} d="M24 14H38V20H24Z" /><Link x={6} y={6} s={0.85} /><Sync x={28} y={10} r={6} /></>),
  gap,
  gap,
  sm(<><Doc x={8} y={8} w={28} h={24} /><path d="M18 16H32M18 21H32M18 26H32" stroke="#8c8f94" strokeWidth={1.6} /><Link x={6} y={4} s={0.85} /><F c={B} d="M27 26H33V32H38L30 40L22 32H27Z" /></>),
];

const parametric: It[] = [
  big(<><L c="#cc6a6a" d="M15 12V68" w={2.4} /><Q x={15} y={73} s={7} c="#cc6a6a" /><L d="M20 73H76" w={2} /></>, true),
  sm(<><R x={6} y={14} w={14} h={11} /><L c="#cc6a6a" d="M20 5V26" w={2} /><R x={22} y={4} w={14} h={11} c={B} /><Bolt x={22} y={24} /></>),
  sm(<><Bracket /><Bulb x={32} y={27} /></>),
  big(<><Dim x1={13} x2={75} y={25} top={12} bot={76} w={2.4} head={6} /><path d="M37 50V43A7 7 0 0 1 51 43V50" stroke={Y} strokeWidth={4} fill="none" /><R x={31} y={50} w={26} h={22} c={Y} /><R x={43} y={57} w={2} h={8} c={BG} /></>, true),
  sm(<><L d="M6 6V37M37 6V37" /><L d="M8 12H35" /><F d="M7 12L13 9V15Z" /><F d="M36 12L30 9V15Z" /><path d="M16 28A6 6 0 0 1 26 23" stroke={B} strokeWidth={2.4} fill="none" /><path d="M28 28A6 6 0 0 1 18 33" stroke={RD} strokeWidth={2.4} fill="none" /></>),
  sm(<><DimTop /><Bulb x={33} y={27} /></>),
  sm(<><Bracket /><Bulb x={32} y={27} c={Y} c2={CY} /></>),
  sm(<><Bracket /><Bulb x={32} y={27} c={CY} /></>),
  sm(<><DimTop /><Bulb x={33} y={27} c={Y} c2={CY} /></>),
  sm(<><DimTop /><Bulb x={33} y={27} c={CY} /></>),
];

const Gear = ({ size = 18, c = '#ffffff' }: { size?: number; c?: string }) => (
  <svg width={size} height={size} viewBox="0 0 18 18" className="block">
    <circle cx={9} cy={9} r={4.7} stroke={c} strokeWidth={3.4} fill="none" />
    <path d="M9 0.5V17.5M0.5 9H17.5M3 3L15 15M15 3L3 15" stroke={c} strokeWidth={3} strokeDasharray="2.6 12" strokeDashoffset={0} />
  </svg>
);
const Caret = ({ c = '#cfd3d8', w = 14, h = 8 }: { c?: string; w?: number; h?: number }) => (
  <svg width={w} height={h} viewBox="0 0 14 8" className="block">
    <path d="M0 0H14L7 8Z" fill={c} />
  </svg>
);
const Chev = ({ c = '#c0c4ca' }: { c?: string }) => (
  <svg width={16} height={10} viewBox="0 0 16 10" className="block">
    <path d="M1 1L8 8L15 1" stroke={c} strokeWidth={2} fill="none" />
  </svg>
);
const Dock = () => (
  <svg width={22} height={28} viewBox="0 0 22 28" className="block">
    <path d="M7 6V1H20V27H7V22" stroke="#e8e8e8" strokeWidth={2} fill="none" />
    <path d="M2 14H13" stroke="#e8e8e8" strokeWidth={2.4} />
    <path d="M0 14L6 9V19Z" fill="#e8e8e8" />
  </svg>
);

const Section: React.FC<{ title: string; items: It[]; h: 'a' | 'b' | 'c'; first?: boolean }> = ({ title, items, h, first }) => (
  <div className={`mx-2 border-b-[3px] border-[#272c37] ${h === 'a' ? 'h-[144px]' : h === 'b' ? 'h-[192px]' : 'h-[189px]'}`}>
    <div className={`flex items-center justify-between pr-[3px] pt-[3px] ${first ? 'h-[39px]' : 'h-[43px]'}`}>
      <div className="flex items-center">
        <div className="mx-px mt-[2px]"><Caret c="#f2f2f2" w={16} h={9} /></div>
        <span className="ml-[8px] text-[19px] leading-none text-[#e6e6e6]">{title}</span>
      </div>
      <Gear />
    </div>
    <div className="grid grid-cols-[repeat(8,44px)] auto-rows-[44px] gap-y-[2px]">
      {items.map((it, i) => (
        <div key={i} className={`relative ${it.big ? 'col-span-2 row-span-2' : ''}`}>
          {it.n}
          {it.fly && (
            <svg width={8} height={8} viewBox="0 0 8 8" className="absolute bottom-0 right-0">
              <path d="M8 0V8H0Z" fill="#8c9098" />
            </svg>
          )}
        </div>
      ))}
    </div>
  </div>
);

const Swatch = ({ c }: { c: string }) => (
  <span className="block h-[18px] w-[18px] border-2 border-black" style={{ background: c }} />
);

const Combo: React.FC<P & { cls?: string }> = ({ children, cls = '' }) => (
  <div className={`flex h-[36px] items-center justify-between rounded-[3px] border-2 border-[#2f3d44] bg-[#4e5a6e] pr-[8px] text-[22.4px] text-[#ececec] ${cls}`}>
    {children}
    <Caret />
  </div>
);

const PropRow: React.FC<P & { label: string }> = ({ label, children }) => (
  <div className="flex h-[36px] items-center">
    <div className="w-[240px] shrink-0 pl-[87px] text-right text-[22.4px] leading-none whitespace-nowrap text-[#b4b8bf]">{label}</div>
    <div className="ml-[20px] w-[185px]">{children}</div>
  </div>
);

const layers = [
  ['0', '#ffffff'],
  ['circulo', '#66ff4d'],
  ['esquadria', '#808080'],
  ['pentagono', '#66ffff'],
  ['quadrado', '#f04024'],
  ['rec_ouro', '#f050f0'],
  ['rec_r2', '#1a33ff'],
  ['triangulo', '#ffff4d'],
];

const docTabs = [
  { t: 'parabola', w: 'w-[257px]' },
  { t: 'figuras g...etricas*', w: 'w-[260px]' },
  { t: 'Drawing2*', w: 'w-[258px]', active: true },
  { t: 'figuras_g...metricas*', w: 'w-[270px]' },
  { t: 'Drawing2*', w: 'w-[256px]' },
];

const layerTools: React.ReactNode[] = [
  <g key="a"><C x={25} y={8} r={6} f={G} c={G} /><F c={B} d="M10 16H33L27 23H4Z" /><path d="M29 21L24 27H3M27 28L22 33H3" stroke={G} strokeWidth={2.4} fill="none" /></g>,
  <g key="b"><F d="M12 3H30L24 9H6Z" /><path d="M3 15H22M26 10L20 15M3 21H18" stroke={G} strokeWidth={2.4} fill="none" /><F c={Y} d="M17 28L24 21L33 29L27 35Z" /><F c={W} d="M25 20L30 15L36 20L31 25L34 27L32 28L25 21Z" /></g>,
  <g key="c"><path d="M5 16H32L27 21H5M7 23H32L27 29H3M7 29H30L25 35H3" stroke={G} strokeWidth={2.4} fill="none" /><F c={B} d="M1 8L11 1V6C20 6 25 8 25 15C22 11 18 11 11 11V15Z" /></g>,
  <g key="d"><F d="M12 3H30L24 9H6Z" /><path d="M4 15H22L28 9M3 21H24" stroke={G} strokeWidth={2.4} fill="none" /><F c={B} d="M4 20H30L25 26H2Z" /><path d="M4 31H18" stroke={G} strokeWidth={2.4} /><path d="M30 22L20 32" stroke={W} strokeWidth={2.4} /><F c={W} d="M16 36L19 25L27 33Z" /></g>,
  <g key="e"><F d="M12 3H30L24 9H6Z" /><path d="M4 15H22L28 9M3 21H24" stroke={G} strokeWidth={2.4} fill="none" /><F c={B} d="M4 20H30L25 26H2Z" /><path d="M4 31H14" stroke={G} strokeWidth={2.4} /><path d="M17 36L28 25" stroke={W} strokeWidth={2.4} /><F c={W} d="M33 20L30 31L22 23Z" /></g>,
  <g key="f"><F d="M10 3H28L18 15H0Z" /><Snow x={24} y={22} c={CY} r={7.5} /></g>,
  <g key="g"><F d="M10 3H28L18 15H0Z" /><Bulb x={24} y={18} c={CY} /></g>,
  <g key="h"><F d="M10 3H28L18 15H0Z" /><Lock x={24} y={22} c={CY} /></g>,
  <g key="i"><F d="M10 3H28L18 15H0Z" /><Lock x={20} y={22} c={Y} open /></g>,
];

const statusIcon = (n: React.ReactNode, active = false) => (
  <div className={`flex h-[40px] w-[40px] items-center justify-center ${active ? 'bg-[#6a8ebc]' : ''}`}>
    <Sv w={36} h={36}>{n}</Sv>
  </div>
);

export default function App() {
  return (
    <div className="flex h-[1800px] w-[2880px] flex-col overflow-hidden bg-[#3b4453] font-['Noto_Sans',sans-serif] text-[#d6d6d6]">
      {/* top toolbar */}
      <div className="flex h-[80px] shrink-0 gap-[76px] pl-[386px] pt-[12px]">
        {top.map((g, i) => (
          <div key={i} className="flex">
            {g.map((ic, j) => (
              <div key={j} className="flex h-[68px] w-[66px] items-center justify-center">
                <Sv>{ic}</Sv>
              </div>
            ))}
          </div>
        ))}
      </div>

      <div className="flex min-h-0 flex-1">
        {/* left palette */}
        <div className="flex w-[368px] shrink-0 flex-col">
          <div className="flex h-[48px] shrink-0 border-t-2 border-[#272c37] text-[22px] leading-none">
            <div className="flex w-[160px] items-center justify-center text-[#f2f2f2]">Drafting</div>
            <div className="flex w-[161px] items-center justify-center border-x-2 border-b-2 border-[#272c37] bg-[#2f3542] text-[#b4b8bf]">Modeling</div>
            <div className="flex flex-1 items-center justify-center border-b-2 border-[#272c37] text-[#9ea3ab]">
              <svg width={14} height={14} viewBox="0 0 14 14"><path d="M6 1L1 7L6 13M13 1L8 7L13 13" stroke="#9ea3ab" strokeWidth={1.6} fill="none" /></svg>
            </div>
          </div>
          <Section title="Draw" items={draw} h="c" first />
          <Section title="Hatch" items={hatch} h="a" />
          <Section title="Block" items={block} h="b" />
          <Section title="Modify" items={modify} h="b" />
          <Section title="Text" items={text} h="a" />
          <Section title="Dimension" items={dimension} h="a" />
          <Section title="Leader" items={leader} h="a" />
          <Section title="Table" items={table} h="a" />
          <Section title="Parametric" items={parametric} h="a" />
          <div className="flex-1" />
          <div className="flex h-[50px] shrink-0 items-center gap-[34px] pl-[31px] pt-[6px]">
            <svg width={22} height={22} viewBox="0 0 22 22"><path d="M11 0V22M0 11H22" stroke="#d6d6d6" strokeWidth={2} /></svg>
            <svg width={28} height={20} viewBox="0 0 28 20">
              <path d="M5 1H28M2 7H28M5 19H28" stroke="#d6d6d6" strokeWidth={2} />
              <path d="M0 13H18" stroke="#d6d6d6" strokeWidth={3.4} />
              <path d="M20 14L24 10L28 14Z" fill="#d6d6d6" />
            </svg>
          </div>
        </div>

        <div className="flex min-w-0 flex-1 flex-col">
          <div className="flex min-h-0 flex-1">
            {/* drawing area */}
            <div className="flex min-w-0 flex-1 flex-col">
              <div className="flex h-[48px] shrink-0 border-y-2 border-[#272c37] text-[21.5px] leading-none">
                <div className="flex w-[48px] items-center justify-center border-r-2 border-[#272c37]">
                  <svg width={30} height={28} viewBox="0 0 30 28">
                    <rect x={0} y={0} width={14} height={13} fill="#84bdf0" />
                    <rect x={17} y={0} width={13} height={13} fill="#d6d6d6" />
                    <rect x={2} y={16} width={12} height={12} fill="#d6d6d6" />
                    <rect x={17} y={16} width={13} height={12} fill="#d6d6d6" />
                  </svg>
                </div>
                <div className="flex w-[47px] items-center justify-center border-r-2 border-[#272c37]">
                  <svg width={22} height={22} viewBox="0 0 22 22"><path d="M11 0V22M0 11H22" stroke="#d6d6d6" strokeWidth={2} /></svg>
                </div>
                {docTabs.map((t, i) => (
                  <div key={i} className={`relative flex items-center border-r-2 border-[#272c37] pb-[1px] pl-[6px] ${t.w} ${t.active ? 'bg-[#4e5a6e] font-semibold text-[#f4f4f4]' : 'text-[#a5a9b0]'}`}>
                    {t.t}
                    {t.active && (
                      <svg width={12} height={12} viewBox="0 0 12 12" className="absolute right-[12px] top-[15px]"><path d="M1 1L11 11M11 1L1 11" stroke="#a5a9b0" strokeWidth={1.6} /></svg>
                    )}
                  </div>
                ))}
              </div>
              <div className="relative min-h-0 flex-1 bg-[#8c8c8c] pl-[220px] pt-[277px]">
                <div className="flex h-[1077px] w-[1524px] border border-[#4a4a4a] bg-white pb-[14px] pl-[17px] pr-[17px] pt-[17px] shadow-[0_0_10px_rgba(0,0,0,0.35)]">
                  <div className="flex-1 border-[1.5px] border-[#555555]" />
                </div>
                {/* crosshair */}
                <svg width={146} height={146} viewBox="0 0 146 146" className="absolute left-[1048px] top-[620px]">
                  <path d="M73 0V67M73 79V146M0 73H67M79 73H146" stroke="#333" strokeWidth={1.2} />
                  <rect x={67.5} y={67.5} width={11} height={11} stroke="#333" strokeWidth={1.2} fill="#fff" />
                </svg>
                {/* ucs icon */}
                <svg width={104} height={180} viewBox="0 0 104 180" className="absolute left-[31px] top-[1415px]">
                  <path d="M2 1V175H102ZM2 158H18V175M5 52L18 65M31 52L18 65V77M57 147L82 171M82 147L57 171" stroke="#2348e0" strokeWidth={1.6} fill="none" />
                </svg>
                {/* command line */}
                <div className="absolute bottom-0 left-[520px] w-[1000px] text-[20px] leading-none text-[#d8d8d8]">
                  <div className="relative ml-[80px] h-[51px] overflow-hidden bg-[#3b4453] pl-[11px] pt-[9px]">
                    <div className="h-[6px] overflow-hidden text-[#c4c8ce]">
                      <div className="-mt-[12px] whitespace-nowrap">Select object to trim or shift-select to extend or</div>
                    </div>
                    <div className="ml-[5px] mt-[12px] whitespace-nowrap text-[19.9px]">[cuTting edges/Crossing/mOde/Project/eRase/Undo]: *Cancel*</div>
                    <div className="absolute right-[11px] top-[12px] h-[35px] w-[8px] rounded-full bg-[#868e9a]" />
                  </div>
                  <div className="relative flex h-[48px] items-center bg-[#3b4453]">
                    <svg width={44} height={22} viewBox="0 0 44 22" className="ml-[18px]">
                      <path d="M1 2L8 7L1 11" stroke="#d6d6d6" strokeWidth={2} fill="none" />
                      <path d="M14 19H26" stroke="#d6d6d6" strokeWidth={2} />
                      <path d="M32 7H44L38 15Z" fill="#b0b4bb" />
                    </svg>
                    <span className="ml-[28px] text-[22px] italic text-[#9a9fa8]">Type a command</span>
                    <svg width={14} height={10} viewBox="0 0 14 10" className="absolute left-[918px] top-[20px]"><path d="M7 0L14 10H0Z" fill="#9a9fa8" /></svg>
                    <svg width={44} height={46} viewBox="0 0 44 46" className="absolute left-[950px] top-[-8px]">
                      <path d="M4 28V44H28V28M4 28H14V44" stroke="#d6d6d6" strokeWidth={2} fill="none" />
                      <path d="M16 38V24" stroke="#84bdf0" strokeWidth={2} />
                      <path d="M16 20L21 28H11Z" fill="#84bdf0" />
                      <circle cx={30} cy={18} r={9} fill="#e8793f" stroke="#fff" strokeWidth={2} />
                    </svg>
                  </div>
                </div>
              </div>
            </div>

            {/* right palettes */}
            <div className="flex w-[472px] shrink-0 flex-col">
              <div className="flex h-[48px] shrink-0 border-t-2 border-[#272c37]">
                <div className="flex w-[104px] items-center justify-center">
                  <Sv w={36} h={36}><F d="M9 2H26L21 8H4Z" /><path d="M2 12H20L24 8M1 18H16M2 24H18" stroke={G} strokeWidth={2.6} fill="none" /><circle cx={25} cy={26} r={8} fill="#e8e8e8" /><path d="M25 25V31" stroke={BG} strokeWidth={2.4} /><circle cx={25} cy={21.5} r={1.4} fill={BG} /></Sv>
                </div>
                <div className="flex w-[106px] items-center justify-center border-x-2 border-b-2 border-[#272c37] bg-[#2f3542]">
                  <Sv w={36} h={36}><Doc x={4} y={10} w={30} h={24} /><rect x={3} y={1} width={10} height={21} rx={5} stroke={G} strokeWidth={1.6} fill="#2f3542" /><path d="M7 6V16" stroke={G} strokeWidth={1.6} /></Sv>
                </div>
                <div className="flex w-[104px] items-center justify-center border-r-2 border-b-2 border-[#272c37] bg-[#2f3542]">
                  <Sv w={36} h={36}><R x={4} y={3} w={27} h={26} c={G} /><R x={4} y={3} w={27} h={5} c="#8c8f94" /><path d="M8 12H27V24H8ZM8 18H27M14 12V24M21 12V24" stroke="#3f4756" strokeWidth={2} fill="none" /><R x={8} y={26} w={19} h={2} c="#8c8f94" /></Sv>
                </div>
                <div className="flex-1 border-r-2 border-b-2 border-[#272c37] bg-[#2f3542]" />
                <div className="flex w-[48px] items-center justify-center border-b-2 border-[#272c37]">
                  <svg width={14} height={14} viewBox="0 0 14 14"><path d="M1 1L6 7L1 13M8 1L13 7L8 13" stroke="#9ea3ab" strokeWidth={1.6} fill="none" /></svg>
                </div>
              </div>

              <div className="flex h-[36px] items-center justify-between pb-[2px] pl-[21px] pr-[20px] text-[24px] leading-none text-[#e8e8e8]">
                Layers
                <Dock />
              </div>
              <div className="mt-[23px] flex h-[44px] pl-[20px]">
                {layerTools.map((n, i) => (
                  <div key={i} className="flex w-[48px] items-center justify-center">
                    <Sv w={36} h={36}>{n}</Sv>
                  </div>
                ))}
              </div>

              <div className="mx-[20px] mt-[17px] flex h-[49px] items-center rounded-[4px] border-2 border-[#2f3d44] bg-[#4e5a6e] pr-[6px]">
                <span className="ml-[20px] block h-[16px] w-[16px] rounded-full bg-[#dcdcdc]" />
                <div className="ml-[16px] opacity-40">
                  <Sv w={20} h={24}><Lock x={10} y={13} c="#aab0ba" /></Sv>
                </div>
                <div className="ml-[9px] opacity-40">
                  <Sv w={30} h={24}><Snow x={15} y={12} c="#aab0ba" r={7} /></Sv>
                </div>
                <div className="ml-[10px]"><Swatch c="#808080" /></div>
                <div className="ml-[8px] opacity-40">
                  <Sv w={28} h={24}><RO x={2} y={3} w={20} h={15} c="#aab0ba" /><Snow x={20} y={16} c="#aab0ba" r={6} /></Sv>
                </div>
                <span className="ml-[21px] flex-1 pb-[2px] text-[22px] leading-none text-[#ececec]">esquadria</span>
                <Caret c="#d6d6d6" />
              </div>
              <div className="mx-[22px] mt-[8px] flex h-[48px] items-center justify-between rounded-[4px] border-2 border-[#2f3d44] bg-[#4e5a6e] pl-[13px] pr-[8px] text-[22px] font-medium leading-none text-[#ececec]">
                <span className="pb-[3px]">Unsaved Layer State</span>
                <Caret c="#d6d6d6" />
              </div>
              <div className="mt-[9px] flex h-[40px] items-center pl-[28px] text-[22.5px] leading-none text-[#b4b8bf]">
                <Chev c="#b0b4bb" />
                <span className="ml-[24px] pb-[2px]">Hide Layer List</span>
              </div>

              <div className="mx-[20px] mt-[8px] flex h-[48px] items-stretch border-y-2 border-[#272c37] bg-[#2f3542]">
                <div className="flex w-[52px] items-center justify-center">
                  <svg width={26} height={16} viewBox="0 0 26 16"><path d="M0 8C6 -2 20 -2 26 8C20 18 6 18 0 8Z" fill="#e8e8e8" /><circle cx={13} cy={8} r={4.6} fill="#2f3542" /><circle cx={13} cy={8} r={2.6} fill="#e8e8e8" /></svg>
                </div>
                <div className="relative flex w-[282px] items-center bg-[#4e5a6e] pl-[8px]">
                  <svg width={16} height={16} viewBox="0 0 16 16"><path d="M1 1H15V15H1Z" stroke="#d6d6d6" strokeWidth={2} fill="none" /><path d="M1 15L15 1V15Z" fill="#d6d6d6" /></svg>
                  <span className="ml-[15px] text-[21px] font-bold leading-none text-[#d6d6d6]">Name</span>
                  <svg width={12} height={18} viewBox="0 0 12 18" className="absolute right-[13px] top-[12px]"><path d="M6 0L12 7H0ZM6 18L0 11H12Z" fill="#d6d6d6" /></svg>
                  <svg width={12} height={9} viewBox="0 0 12 9" className="absolute bottom-0 left-[134px]"><path d="M6 0L12 9H0Z" fill="#4b8fe6" /></svg>
                </div>
                <div className="flex w-[44px] items-center justify-center border-r-2 border-[#363d4b]"><Sv w={20} h={20}><Snow x={10} y={10} c="#e4e4e4" r={7.5} /></Sv></div>
                <div className="flex w-[44px] items-center justify-center border-r-2 border-[#363d4b]"><Sv w={18} h={24}><Lock x={9} y={11} c="#e4e4e4" /></Sv></div>
              </div>
              <div className="mx-[20px] flex h-[390px] shrink-0 flex-col border-b-2 border-[#272c37] bg-[#4e5a6e] pl-[2px]">
                {layers.map(([n, c]) => (
                  <div key={n} className={`flex h-[38px] shrink-0 items-center ${n === 'esquadria' ? 'bg-[#8e9db0]' : ''}`}>
                    <span className="ml-[14px] block h-[16px] w-[16px] rounded-full bg-[#dcdcdc]" />
                    <span className="ml-[24px]"><Swatch c={c} /></span>
                    <span className="ml-[18px] pb-[1px] text-[22px] leading-none text-[#f0f0f0]">{n}</span>
                  </div>
                ))}
              </div>
              <div className="ml-[25px] mt-[10px] h-[14px] w-[151px] rounded-full bg-[#868e9a]" />
              <div className="relative mt-[16px] flex h-[36px] items-center pl-[32px]">
                <div className="opacity-70"><Sv w={40} h={34}><path d="M11 6H26L19 14H5ZM2 20H18L26 12M2 26H18L26 18" stroke={G} strokeWidth={1.8} fill="none" /></Sv></div>
                <div className="ml-[20px]"><Sv w={40} h={34}><path d="M10 3H26L19 11H4ZM2 17H14M2 22H14" stroke={G} strokeWidth={1.8} fill="none" /><rect x={16} y={15} width={18} height={15} fill={BG} stroke="#e8e8e8" strokeWidth={2} /><path d="M20 20h3M25 20h6M20 25h3M25 25h6" stroke="#e8e8e8" strokeWidth={2} /></Sv></div>
                <div className="ml-[20px]"><Sv w={40} h={34}><F c="#c4c4c4" d="M6 6H14L18 9H26V11H11L6 26Z" /><F c="#dadada" d="M12 13H32L26 28H6Z" /></Sv></div>
                <div className="ml-[20px]"><Sv w={40} h={34}><F c="#c4c4c4" d="M6 4H14L18 7H30V10H11L6 28Z" /><F c="#dadada" d="M12 12H34L28 30H6Z" /><At x={14} y={14} s={0.7}><F c={BG} d="M9 0L0 11H6L2 20L15 8H9L14 0Z" /></At></Sv></div>
                <span className="absolute left-[354px] top-[14px] block h-[4px] w-[16px] bg-[#868e9a]" />
                <div className="absolute left-[404px] top-[8px] flex items-center gap-[6px]">
                  <svg width={20} height={16} viewBox="0 0 20 16"><path d="M1 1H19V15H1ZM7 1V15M13 1V15" stroke="#d6d6d6" strokeWidth={2} fill="none" /></svg>
                  <Caret c="#c4c8ce" w={10} h={6} />
                </div>
              </div>
              <div className="mx-[22px] mt-[6px] flex h-[40px] shrink-0 items-center rounded-[10px] bg-white pl-[10px]">
                <svg width={36} height={28} viewBox="0 0 36 28">
                  <circle cx={11} cy={11} r={9} stroke="#222" strokeWidth={2} fill="none" />
                  <path d="M17 17L25 25" stroke="#222" strokeWidth={2.4} />
                  <path d="M25 9L30 14L35 9" stroke="#222" strokeWidth={2} fill="none" />
                </svg>
                <span className="ml-[8px] text-[25px] leading-none text-[#b9b9b9]">Search for layer</span>
              </div>
              <div className="mt-[17px] h-[3px] shrink-0 bg-[#2a303b]" />
              <div className="relative flex h-[36px] shrink-0 items-center pl-[21px] text-[24px] leading-none text-[#e8e8e8]">
                Properties
                <div className="absolute left-[240px] top-0 flex h-[26px] w-[120px] border-2 border-t-0 border-[#2a303b] text-[17px] font-medium">
                  <div className="flex w-[58px] items-center justify-center bg-[#4e5a6e] text-[#e8e8e8]">All</div>
                  <div className="flex flex-1 items-center justify-center border-l-2 border-[#2a303b] text-[#8d939c]">My</div>
                </div>
                <div className="absolute left-[376px] top-[-2px]">
                  <Sv w={32} h={30}><RO x={2} y={2} w={17} h={22} c="#8c9098" /><path d="M6 8H15M6 12H15M6 16H12" stroke="#8c9098" strokeWidth={1.6} /><F c="#8c9098" d="M15 24L25 13L30 18L20 28H15Z" /></Sv>
                </div>
                <div className="absolute left-[429px] top-[0px]"><Dock /></div>
              </div>
              <div className="mx-[24px] mt-[15px] flex h-[42px] shrink-0 items-center justify-between rounded-[3px] border border-[#3f4858] bg-[#454f60] pl-[13px] pr-[10px] text-[22.5px] leading-none text-[#8a93a0]">
                Paper Space
                <Caret c="#7c8490" />
              </div>
              <div className="mt-[21px] flex h-[40px] shrink-0 items-center pl-[27px] text-[22px] font-bold leading-none text-[#cfd2d6]">
                <Chev c="#22262f" />
                <span className="ml-[23px]">General</span>
              </div>
              <div className="mt-[16px] flex flex-col gap-[10px]">
                <PropRow label="Color">
                  <Combo>
                    <span className="ml-[16px]"><Swatch c="#808080" /></span>
                    <span className="ml-[22px] flex-1 leading-none">ByLayer</span>
                  </Combo>
                </PropRow>
                <PropRow label="Layer"><Combo cls="pl-[13px]"><span className="leading-none">esquadria</span></Combo></PropRow>
                <PropRow label="Linetype">
                  <Combo>
                    <span className="ml-[13px] block h-[2px] w-[64px] bg-[#f0f0f0]" />
                    <span className="ml-[28px] flex-1 leading-none">By...</span>
                  </Combo>
                </PropRow>
                <PropRow label="Linetype scale">
                  <div className="flex h-[36px] items-center rounded-[3px] border-2 border-[#2f3d44] bg-[#4e5a6e] pl-[6px] text-[22.4px] leading-none text-[#ececec]">1.0000</div>
                </PropRow>
                <PropRow label="Lineweight"><Combo cls="pl-[13px]"><span className="leading-none">ByLayer</span></Combo></PropRow>
                <PropRow label="Transparency">
                  <div className="flex h-[36px] gap-[6px]">
                    <div className="relative ml-[6px] flex w-[96px] items-center justify-end border-2 border-[#2f3d44] bg-[#4e5a6e] pr-[5px] text-[22.4px] leading-none text-[#ececec]">
                      0
                      <span className="absolute left-0 top-[3px] block h-[26px] w-[3px] bg-[#4b8fe6]" />
                      <span className="absolute left-[43px] top-[20px] block h-[10px] w-[1px] bg-[#8c93a0]" />
                    </div>
                    <div className="flex flex-1 items-center justify-between rounded-[3px] border-2 border-[#2f3d44] bg-[#4e5a6e] pl-[14px] pr-[8px]">
                      <Sv w={26} h={24}><F c={B} d="M8 4H24L17 10H2Z" /><path d="M2 14H16L24 8M2 19H16L24 13" stroke={G} strokeWidth={2} fill="none" /></Sv>
                      <Caret />
                    </div>
                  </div>
                </PropRow>
              </div>
              <div className="mt-[16px] flex h-[40px] shrink-0 items-center pl-[27px] text-[22px] font-bold leading-none text-[#cfd2d6]">
                <Chev c="#22262f" />
                <span className="ml-[23px]">Annotation</span>
              </div>
              <div className="mt-[16px] flex flex-col gap-[10px]">
                <PropRow label="Text style"><Combo cls="pl-[13px]"><span className="leading-none">Standard</span></Combo></PropRow>
                <PropRow label="Dimension style"><Combo cls="pl-[13px]"><span className="leading-none">Standard</span></Combo></PropRow>
                <PropRow label="Detail View st..."><Combo cls="pl-[13px]"><span className="leading-none">Imperial24</span></Combo></PropRow>
                <PropRow label="Multileader st..."><Combo cls="pl-[13px]"><span className="leading-none">Standard</span></Combo></PropRow>
                <PropRow label="Section View..."><Combo cls="pl-[13px]"><span className="leading-none">Imperial24</span></Combo></PropRow>
                <div className="ml-[260px] h-[8px] w-[185px] rounded-t-[3px] border-2 border-b-0 border-[#2f3d44] bg-[#4e5a6e]" />
              </div>
            </div>
          </div>

          {/* status bar */}
          <div className="flex h-[50px] shrink-0 items-stretch border-y-2 border-[#272c37] text-[22px] leading-none">
            <div className="flex w-[120px] items-center justify-center border-x-2 border-[#272c37] text-[#a5a9b0]">Model</div>
            <div className="flex w-[48px] items-center justify-center border-r-2 border-[#272c37]">
              <svg width={22} height={22} viewBox="0 0 22 22"><path d="M11 0V22M0 11H22" stroke="#d6d6d6" strokeWidth={2} /></svg>
            </div>
            <div className="flex w-[110px] items-center justify-center border-r-2 border-[#272c37] bg-[#4e5a6e] font-medium text-[#f0f0f0]">a3rd</div>
            <div className="flex w-[122px] items-center justify-center border-r-2 border-[#272c37] text-[#a5a9b0]">Layout2</div>
            <div className="flex w-[118px] items-center justify-center border-r-2 border-[#272c37] text-[#a5a9b0]">Layout1</div>
            <div className="w-[1021px] border-r-2 border-[#272c37]" />
            <div className="flex w-[275px] items-center pl-[24px] text-[23.5px] text-[#b4b8bf] whitespace-nowrap">0.2485, 0.1825, 0.0000</div>
            <div className="flex items-center">
              {statusIcon(<><R x={2} y={3} w={32} h={30} c="#6f7785" /><path d="M16 7H32V31H16M16 13H32M16 19H32M16 25H32M22 7V31M27 7V31" stroke="#545c6a" strokeWidth={2} fill="none" /><F c="#3b4453" d="M2 6H8L14 33H8Z" /></>)}
              <div className="ml-[3px]">{statusIcon(<><path d="M5 2V33H36M5 20H15V33" stroke="#d6d6d6" strokeWidth={2} fill="none" /></>)}</div>
              <div className="ml-[5px]">{statusIcon(<><C x={15} y={20} r={13} c={W} /><path d="M8 32L25 4M12 22H36" stroke={W} strokeWidth={2} /><F c={W} d="M26 14V24H22Z" /></>, true)}</div>
              <div className="ml-[4px]">{statusIcon(<><path d="M11 4V20M3 12H19" stroke={W} strokeWidth={2.6} /><R x={14} y={22} w={20} h={12} c={W} /><R x={8} y={26} w={6} h={4} c={W} /></>, true)}</div>
              <div className="ml-[4px] mr-[4px]">{statusIcon(<><R x={2} y={4} w={32} h={6} c={G} /><R x={2} y={14} w={26} h={8} c={G} /><R x={2} y={26} w={30} h={6} c={G} /><R x={2} y={12} w={16} h={2} c={G} /></>)}</div>
              {statusIcon(<><RO x={5} y={3} w={26} h={30} c={W} />{[0, 1, 2, 3, 4, 5].map(r => [0, 1, 2, 3].map(c => (r + c) % 2 ? <R key={`${r}${c}`} x={8 + c * 5.2} y={6 + r * 4.2} w={5.2} h={4.2} c={W} /> : null))}</>, true)}
              <div className="ml-[4px]">{statusIcon(<><path d="M10 3H4V30H10M24 3H30V30H24" stroke={W} strokeWidth={2} fill="none" /><RO x={10} y={6} w={12} h={7} c={W} /><C x={16} y={21} r={4} c={W} /><F c={W} d="M22 18L34 31L27 31L29 36L25 36L24 32Z" /></>, true)}</div>
              <div className="ml-[4px]">{statusIcon(<><L c={W} d="M3 32H33M4 32L14 20M18 15L28 4" /><R x={13} y={14} w={6} h={7} c={W} /></>, true)}</div>
              <div className="ml-[4px]">{statusIcon(<><path d="M12 8H33V33H8V15" stroke={W} strokeWidth={2} fill="none" /><RO x={3} y={3} w={10} h={10} c={W} /></>, true)}</div>
            </div>
            <div className="ml-[17px] flex items-center">
              <svg width={13} height={30} viewBox="0 0 13 30"><path d="M13 0V30L0 15Z" fill="#727a88" /></svg>
              <div className="ml-[14px]">
                <Sv w={36} h={36}><path d="M4 5H8M14 4H20M26 4H33V10M33 16V20M33 28V33H27M20 33H14M8 33H3V27M3 20V15" stroke={G} strokeWidth={2} fill="none" /><F d="M2 2L10 2L2 10Z" /><RO x={11} y={13} w={15} h={14} /></Sv>
              </div>
              <div className="ml-[14px]"><svg width={13} height={30} viewBox="0 0 13 30"><path d="M0 0V30L13 15Z" fill="#727a88" /></svg></div>
              <div className="ml-[15px]"><Sv w={40} h={36}><F d="M14 5L18 17L32 33L18 27L4 33L12 19Z" /><C x={28} y={11} r={5} /></Sv></div>
              <div className="ml-[6px]"><Sv w={40} h={36}><F d="M14 5L18 17L32 33L18 27L4 33L12 19Z" /><Bolt x={22} y={3} s={0.95} /></Sv></div>
              <div className="ml-[6px]"><Sv w={36} h={36}><RO x={3} y={2} w={13} h={13} /><C x={27} y={18} r={5} /><path d="M13 20L22 34H4Z" stroke={G} strokeWidth={2} fill="none" /></Sv></div>
              <div className="ml-[10px]"><Gear size={32} c="#d6d6d6" /></div>
            </div>
          </div>
        </div>
      </div>
    </div>
  );
}
